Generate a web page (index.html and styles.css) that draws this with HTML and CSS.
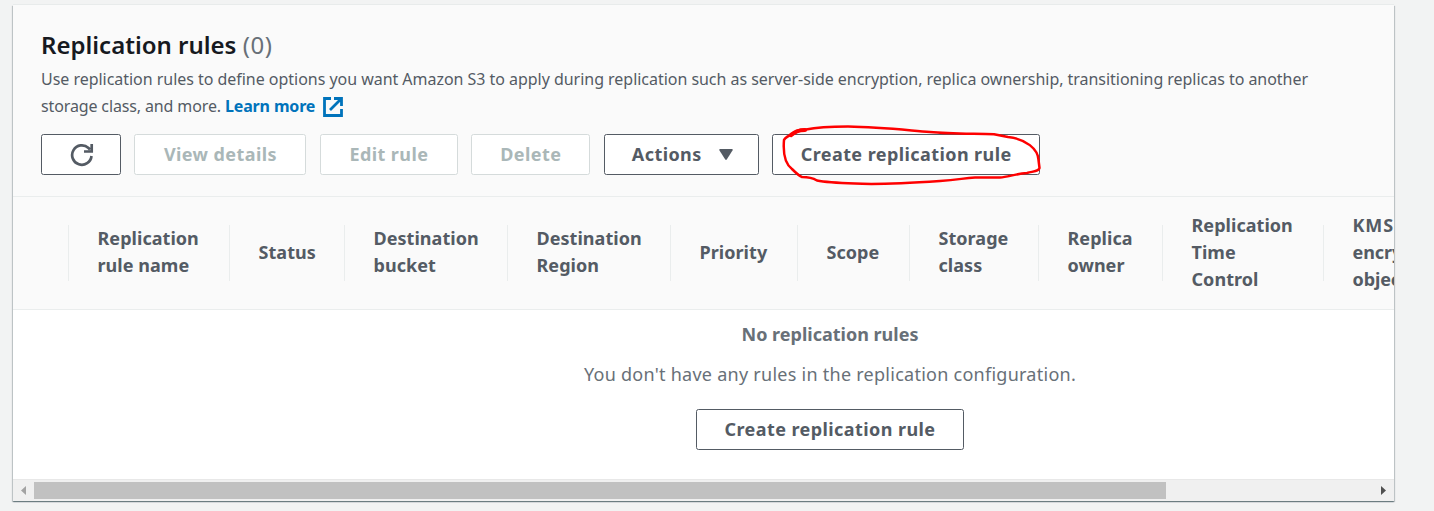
FILE: index.html
```html
<!DOCTYPE html>
<html lang="en">
<head>
<meta charset="utf-8">
<title>Replication rules</title>
<link rel="stylesheet" href="styles.css">
</head>
<body>
<section class="card">
  <header class="card-header">
    <h2 class="title">Replication rules <span class="counter">(0)</span></h2>
    <p class="description">Use replication rules to define options you want Amazon S3 to apply during replication such as server-side encryption, replica ownership, transitioning replicas to another<br><span class="second-line">storage class, and more. </span><a class="link">Learn more<svg class="external" viewBox="0 0 20 20"><path d="M8 1.500H1.500v17h17V12M11 1.500h7.500V9M18 2L7 13"/></svg></a></p>
    <div class="actions">
      <button class="btn btn-refresh" aria-label="Refresh"><svg class="refresh" viewBox="0 0 24 24"><path d="M21.500 13a9.700 9.700 0 1 1-3-8L20 6.500M21.700 1v7.500H14"/></svg></button>
      <button class="btn btn-details" disabled>View details</button>
      <button class="btn btn-edit" disabled>Edit rule</button>
      <button class="btn btn-delete" disabled>Delete</button>
      <button class="btn btn-menu">Actions<svg class="caret" viewBox="0 0 14 11"><path d="M.7 0h12.600l.5 1L7.600 10.700H6.400L.2 1z"/></svg></button>
      <div class="highlighted">
        <button class="btn btn-create">Create replication rule</button>
        <svg class="scribble" viewBox="0 0 310 100"><path d="M31 25C35 21 40 19 46 19.500C60 16.500 72 16.500 88 16.500C120 17 145 20 170 22C190 24 215 23.500 234 24.200L248 27C266 29 278 39 278.500 50L279.500 58C279 61 275 61 267 63C255 64 248 67 240 67.500H215C203 68 199 70 180 71C150 73 120 75 95 73.500C80 73 64 72 57 70.500C52 67.500 49 67 42 67C39 66 35 62 32 59C24 53 23 42 24 30C25 27 30 25 35 23"/><path class="thick" d="M31 25C35 22 38 20 45 20"/></svg>
      </div>
    </div>
  </header>
  <div class="table-scroll">
    <div class="table">
      <div class="table-head">
        <div class="th th-select"></div>
        <div class="th two-line th-name">Replication<br>rule name</div>
        <div class="th th-status">Status</div>
        <div class="th two-line th-bucket">Destination<br>bucket</div>
        <div class="th two-line th-region">Destination<br>Region</div>
        <div class="th th-priority">Priority</div>
        <div class="th th-scope">Scope</div>
        <div class="th two-line th-class">Storage<br>class</div>
        <div class="th two-line th-owner">Replica<br>owner</div>
        <div class="th th-time">Replication<br>Time<br>Control</div>
        <div class="th th-kms"><div><span class="acronym">KMS-</span><br>encrypted<br>objects</div></div>
      </div>
      <div class="empty">
        <strong class="empty-title">No replication rules</strong>
        <p class="empty-text">You don't have any rules in the replication configuration.</p>
        <button class="btn btn-create">Create replication rule</button>
      </div>
    </div>
  </div>
  <div class="scrollbar">
    <svg class="arrow arrow-left" viewBox="0 0 5 9"><path d="M5 0v9L0 4.500z"/></svg>
    <div class="track"><div class="thumb"></div></div>
    <svg class="arrow" viewBox="0 0 5 9"><path d="M0 0v9l5-4.500z"/></svg>
  </div>
</section>
</body>
</html>
```
FILE: styles.css
```css
* { box-sizing: border-box; }
body {
  margin: 0;
  padding: 5px 40px 10px 13px;
  height: 511px;
  overflow: hidden;
  background: #f2f3f3;
  color: #545b64;
  font-family: "Noto Sans", "Open Sans", sans-serif;
}
.card {
  display: flex;
  flex-direction: column;
  height: 496px;
  background: #fff;
  box-shadow: 0 -1px 0 #e8ebeb, 0 1px 1px rgba(0, 28, 36, .35), 1px 1px 1px rgba(0, 28, 36, .17), -1px 1px 1px rgba(0, 28, 36, .17);
}
.card-header {
  height: 191px;
  padding: 25px 28px 0;
  background: #fafafa;
}
.title {
  margin: 0 0 6px;
  font-size: 24px;
  line-height: 30px;
  font-weight: 600;
  color: #16191f;
}
.counter { font-weight: 400; color: #687078; letter-spacing: .5px; }
.description {
  margin: 0 0 14px;
  font-size: 16px;
  line-height: 27px;
  letter-spacing: -.033px;
  white-space: nowrap;
}
.second-line { letter-spacing: -.13px; }
.link { color: #0073bb; font-weight: 700; letter-spacing: -.15px; }
.external {
  width: 20px;
  height: 20px;
  margin-left: 8px;
  vertical-align: -5px;
  fill: none;
  stroke: currentColor;
  stroke-width: 2.8;
}
.actions { display: flex; gap: 13.450px; }
.btn {
  display: flex;
  align-items: center;
  justify-content: center;
  flex: none;
  height: 41px;
  padding: 0 0 1px;
  border: 1px solid #545b64;
  border-radius: 2.500px;
  background: #fff;
  color: #545b64;
  font: 700 18px/27px "Noto Sans", "Open Sans", sans-serif;
  letter-spacing: .42px;
  white-space: nowrap;
}
.btn:disabled { border-color: #d5dbdb; color: #aab7b8; }
.btn-refresh { width: 80px; padding: 1px 0 0 1px; }
.btn-details { width: 172px; }
.btn-edit { width: 138px; }
.btn-delete { width: 119px; }
.btn-menu { width: 155px; padding-left: 2px; }
.btn-create { width: 268px; }
.refresh { width: 24px; height: 24px; fill: none; stroke: currentColor; stroke-width: 2.7; }
.caret { width: 14px; height: 11px; margin-left: 17px; fill: currentColor; }
.highlighted { position: relative; }
.scribble {
  position: absolute;
  left: -12px;
  top: -24px;
  width: 310px;
  height: 100px;
  fill: none;
  stroke: #fe0000;
  stroke-width: 2.5;
  stroke-linecap: round;
  stroke-linejoin: round;
  pointer-events: none;
}
.thick { stroke-width: 4.2; }
.table-scroll { height: 283px; overflow: hidden; }
.table { width: 1634px; }
.table-head {
  display: flex;
  height: 114px;
  padding: 28px 0;
  border-top: 1px solid #eaeded;
  border-bottom: 1px solid #eaeded;
  background: #fafafa;
}
.th {
  display: flex;
  align-items: center;
  flex: none;
  height: 56px;
  padding: 0 0 1px 28.500px;
  border-right: 1px solid #eaeded;
  font-size: 18px;
  line-height: 27px;
  font-weight: 700;
  letter-spacing: .04px;
  white-space: nowrap;
}
.two-line { padding-bottom: 2px; }
.th-select { width: 56px; }
.th-name { width: 161px; }
.th-status { width: 115px; }
.th-bucket, .th-region { width: 163px; }
.th-priority { width: 127px; }
.th-scope { width: 112px; }
.th-class { width: 129px; }
.th-owner { width: 124px; }
.th-time { width: 161px; }
.th-kms { width: 323px; border-right: 0; letter-spacing: -.1px; }
.acronym { letter-spacing: .9px; }
.empty {
  display: flex;
  flex-direction: column;
  align-items: center;
  padding-top: 11px;
  font-size: 18px;
  line-height: 27px;
  color: #687078;
}
.empty-text { margin: 13px 0 21px; letter-spacing: .26px; }
.scrollbar {
  display: flex;
  align-items: center;
  height: 22px;
  padding: 0 8px;
  border-top: 1px solid #e8e8e8;
  background: #f0f0f0;
}
.track { flex: 1; padding: 0 8px; }
.thumb { width: 1132px; height: 17px; background: #c1c1c1; }
.arrow { width: 5px; height: 9px; fill: #505050; }
.arrow-left { fill: #a3a3a3; }
```
